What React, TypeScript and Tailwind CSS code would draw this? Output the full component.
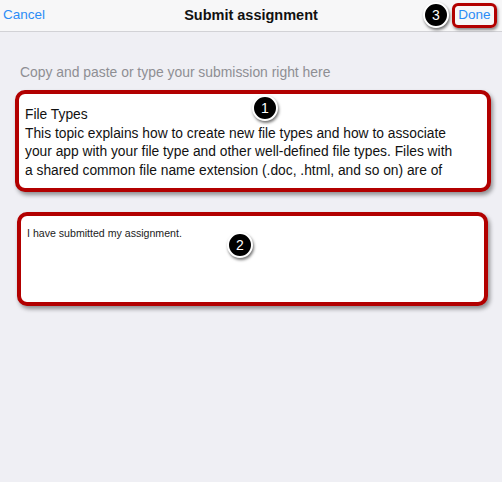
import React from "react";

function Badge({ n, className }: { n: string; className: string }) {
  return (
    <div
      className={
        "absolute flex h-[26px] w-[26px] items-center justify-center rounded-full border-2 border-white bg-black text-[14px] text-white shadow-[1px_2px_3px_rgba(0,0,0,0.55)] " +
        className
      }
    >
      {n}
    </div>
  );
}

export default function App() {
  return (
    <div
      className="relative h-[482px] w-[502px] overflow-hidden bg-[#efeff4]"
      style={{ fontFamily: '"Liberation Sans", Arial, sans-serif' }}
    >
      <header className="relative flex h-[32px] items-center justify-between border-b border-[#d2d2d6] bg-[#f7f7f8] px-[3px]">
        <span className="text-[13.5px] text-[#2b8cf6]">Cancel</span>
        <span className="absolute left-0 right-0 text-center text-[14.5px] font-bold text-[#111]">
          Submit assignment
        </span>
        <div className="relative z-10 mr-[2px] flex h-[25px] w-[45px] items-center justify-center rounded-[6px] border-[3px] border-[#b20000] shadow-[1px_2px_3px_rgba(0,0,0,0.45)]">
          <span className="text-[13.5px] text-[#2b8cf6]">Done</span>
        </div>
        <Badge n="3" className="left-[423px] top-[2px] z-20" />
      </header>

      <div className="pl-[20px] pt-[31px] text-[13.9px] leading-[18px] text-[#8e8e93]">
        Copy and paste or type your submission right here
      </div>

      <div className="relative ml-[15px] mt-[9px] h-[102px] w-[476px] overflow-hidden rounded-[10px] border-4 border-[#b20000] bg-white shadow-[2px_3px_4px_rgba(0,0,0,0.4)]">
        <div className="px-[6px] pt-[12px] text-[13.8px] leading-[18.6px] text-[#111]">
          <div>File Types</div>
          <div>This topic explains how to create new file types and how to associate</div>
          <div>your app with your file type and other well-defined file types. Files with</div>
          <div>a shared common file name extension (.doc, .html, and so on) are of</div>
        </div>
      </div>
      <Badge n="1" className="left-[252px] top-[95px]" />

      <div className="relative ml-[17px] mt-[20px] h-[94px] w-[471px] rounded-[10px] border-4 border-[#b20000] bg-white shadow-[2px_3px_4px_rgba(0,0,0,0.4)]">
        <div className="px-[6px] pt-[11px] text-[10.6px] leading-[12px] text-[#222]">
          I have submitted my assignment.
        </div>
      </div>
      <Badge n="2" className="left-[227px] top-[232px]" />
    </div>
  );
}
